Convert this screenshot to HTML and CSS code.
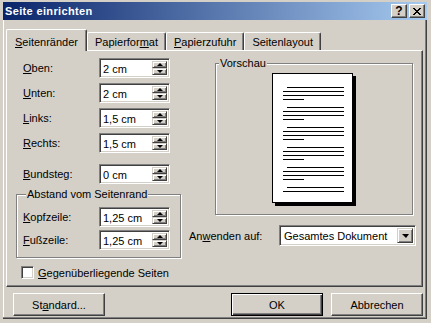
FILE: index.html
```html
<!DOCTYPE html>
<html lang="de">
<head>
    <meta charset="UTF-8">
    <title>Seite einrichten</title>
    <link rel="stylesheet" href="styles.css">
</head>
<body>
    <div class="window">
        <div class="titlebar">
            <span class="title">Seite einrichten</span>
            <div class="caption-buttons">
                <div class="cap-btn help">?</div>
                <div class="cap-btn close">
                    <svg width="8" height="7" viewBox="0 0 8 7" shape-rendering="crispEdges">
                        <path d="M0 0h2v1h-2zM6 0h2v1h-2zM1 1h2v1h-2zM5 1h2v1h-2zM2 2h4v1h-4zM3 3h2v1h-2zM2 4h4v1h-4zM1 5h2v1h-2zM5 5h2v1h-2zM0 6h2v1h-2zM6 6h2v1h-2z" fill="#000"/>
                    </svg>
                </div>
            </div>
        </div>

        <div class="client">
            <div class="tabs">
                <div class="tab active"><u>S</u>eitenränder</div>
                <div class="tab">Papierfor<u>m</u>at</div>
                <div class="tab"><u>P</u>apierzufuhr</div>
                <div class="tab">Seitenlayout</div>
            </div>

            <div class="panel">
                <div class="left-col">
                    <div class="field"><span class="label"><u>O</u>ben:</span><div class="spin"><span class="spin-value">2 cm</span><span class="spin-btns"><span class="spin-up"></span><span class="spin-down"></span></span></div></div>
                    <div class="field"><span class="label"><u>U</u>nten:</span><div class="spin"><span class="spin-value">2 cm</span><span class="spin-btns"><span class="spin-up"></span><span class="spin-down"></span></span></div></div>
                    <div class="field"><span class="label"><u>L</u>inks:</span><div class="spin"><span class="spin-value">1,5 cm</span><span class="spin-btns"><span class="spin-up"></span><span class="spin-down"></span></span></div></div>
                    <div class="field"><span class="label"><u>R</u>echts:</span><div class="spin"><span class="spin-value">1,5 cm</span><span class="spin-btns"><span class="spin-up"></span><span class="spin-down"></span></span></div></div>
                    <div class="field gutter"><span class="label"><u>B</u>undsteg:</span><div class="spin"><span class="spin-value">0 cm</span><span class="spin-btns"><span class="spin-up"></span><span class="spin-down"></span></span></div></div>

                    <fieldset class="group distance">
                        <legend>Abstand vom Seitenrand</legend>
                        <div class="field"><span class="label"><u>K</u>opfzeile:</span><div class="spin"><span class="spin-value">1,25 cm</span><span class="spin-btns"><span class="spin-up"></span><span class="spin-down"></span></span></div></div>
                        <div class="field"><span class="label"><u>F</u>ußzeile:</span><div class="spin"><span class="spin-value">1,25 cm</span><span class="spin-btns"><span class="spin-up"></span><span class="spin-down"></span></span></div></div>
                    </fieldset>

                    <div class="check-row">
                        <span class="checkbox"></span>
                        <span><u>G</u>egenüberliegende Seiten</span>
                    </div>
                </div>

                <div class="right-col">
                    <fieldset class="group preview">
                        <legend>Vorschau</legend>
                        <svg class="page" width="84" height="133" viewBox="0 0 84 133" shape-rendering="crispEdges">
                            <rect x="3" y="3" width="81" height="130" fill="#000"/>
                            <rect x="0" y="0" width="81" height="130" fill="#000"/>
                            <rect x="1" y="1" width="79" height="128" fill="#fff"/>
                            <g fill="#000">
                                <rect x="15" y="14" width="57" height="1"/>
                                <rect x="11" y="18" width="61" height="1"/>
                                <rect x="11" y="22" width="61" height="1"/>
                                <rect x="11" y="26" width="21" height="1"/>

                                <rect x="15" y="34" width="57" height="1"/>
                                <rect x="11" y="38" width="61" height="1"/>
                                <rect x="11" y="42" width="61" height="1"/>
                                <rect x="11" y="46" width="21" height="1"/>

                                <rect x="15" y="54" width="57" height="1"/>
                                <rect x="11" y="58" width="61" height="1"/>
                                <rect x="11" y="62" width="61" height="1"/>
                                <rect x="11" y="66" width="21" height="1"/>

                                <rect x="15" y="74" width="57" height="1"/>
                                <rect x="11" y="78" width="61" height="1"/>
                                <rect x="11" y="82" width="61" height="1"/>
                                <rect x="11" y="86" width="21" height="1"/>

                                <rect x="15" y="94" width="57" height="1"/>
                                <rect x="11" y="98" width="61" height="1"/>
                                <rect x="11" y="102" width="61" height="1"/>
                                <rect x="11" y="106" width="21" height="1"/>

                                <rect x="15" y="114" width="57" height="1"/>
                                <rect x="11" y="118" width="61" height="1"/>
                            </g>
                        </svg>
                    </fieldset>

                    <div class="apply-row">
                        <span class="apply-label">An<u>w</u>enden auf:</span>
                        <div class="combo">
                            <span class="combo-value">Gesamtes Dokument</span>
                            <span class="combo-btn"></span>
                        </div>
                    </div>
                </div>
            </div>

            <div class="button-row">
                <div class="btn standard">St<u>a</u>ndard...</div>
                <div class="btn default">OK</div>
                <div class="btn">Abbrechen</div>
            </div>
        </div>
    </div>
</body>
</html>
```

FILE: styles.css
```css
* {
    box-sizing: border-box;
}

body {
    margin: 0;
    background: #d4d0c8;
    font-family: "Liberation Sans", Arial, sans-serif;
    font-size: 11px;
    color: #000;
}

u {
    text-decoration: underline;
    text-underline-offset: 1px;
}

.window {
    width: 431px;
    height: 323px;
    background: #d4d0c8;
    border-style: solid;
    border-width: 2px 4px 4px 3px;
    border-color: #d4d0c8;
    box-shadow: inset -1px -1px #404040, inset -2px -2px #808080, inset 1px 1px #fff;
    display: flex;
    flex-direction: column;
}

.titlebar {
    height: 18px;
    display: flex;
    align-items: center;
    justify-content: space-between;
    padding: 0 2px 0 2px;
    background: linear-gradient(to right, #0a246a, #a6caf0);
}

.title {
    color: #fff;
    font-weight: bold;
    letter-spacing: 0.35px;
}

.caption-buttons {
    display: flex;
    gap: 2px;
}

.cap-btn {
    width: 16px;
    height: 14px;
    background: #d4d0c8;
    border: 1px solid;
    border-color: #fff #404040 #404040 #fff;
    box-shadow: inset -1px -1px #808080;
    display: flex;
    align-items: center;
    justify-content: center;
}

.help {
    font-weight: bold;
    font-size: 12px;
    line-height: 12px;
}

.client {
    flex: 1;
    padding: 9px 4px 0 3px;
    display: flex;
    flex-direction: column;
}

/* tabs */
.tabs {
    display: flex;
    align-items: flex-end;
    height: 22px;
    position: relative;
    z-index: 1;
    margin-bottom: -1px;
}

.tab {
    height: 18px;
    margin-bottom: 1px;
    padding: 2px 7px 0;
    line-height: 14px;
    border-top: 1px solid #fff;
    border-left: 1px solid #fff;
    border-right: 1px solid #404040;
    box-shadow: inset -1px 0 #808080;
    border-radius: 2px 2px 0 0;
    background: #d4d0c8;
}

.tab.active {
    height: 22px;
    margin-bottom: 0;
    padding: 5px 8px 0;
}

/* panel */
.panel {
    height: 237px;
    border: 1px solid;
    border-color: #fff #404040 #404040 #fff;
    box-shadow: inset -1px -1px #808080;
    display: flex;
}

.left-col {
    width: 178px;
    padding: 7px 0 0 16px;
    display: flex;
    flex-direction: column;
    gap: 5px;
}

.field {
    display: flex;
    align-items: center;
    height: 20px;
}

.label {
    width: 76px;
}

.field.gutter {
    margin-top: 6px;
}

.spin {
    width: 71px;
    height: 20px;
    background: #fff;
    border: 1px solid;
    border-color: #808080 #fff #fff #808080;
    box-shadow: inset 1px 1px #404040, inset -1px -1px #d4d0c8;
    display: flex;
    padding: 2px;
}

.spin-value {
    flex: 1;
    padding-left: 1px;
    line-height: 16px;
}

.spin-btns {
    width: 15px;
    display: flex;
    flex-direction: column;
}

.spin-up,
.spin-down {
    flex: 1;
    background: #d4d0c8;
    border: 1px solid;
    border-color: #d4d0c8 #404040 #404040 #d4d0c8;
    box-shadow: inset 1px 1px #fff, inset -1px -1px #808080;
    display: flex;
    align-items: center;
    justify-content: center;
}

.spin-up::before,
.spin-down::before {
    content: "";
    border-left: 3px solid transparent;
    border-right: 3px solid transparent;
}

.spin-up::before {
    border-bottom: 3px solid #000;
}

.spin-down::before {
    border-top: 3px solid #000;
}

/* group boxes */
.group {
    margin: 0;
    border: 1px solid #808080;
    box-shadow: 1px 1px 0 #fff, inset 1px 1px 0 #fff;
}

.group legend {
    padding: 0 1px;
    margin-left: 3px;
    line-height: 13px;
    background: #d4d0c8;
}

.distance {
    margin: -1px 0 0 -7px;
    width: 165px;
    padding: 6px 0 7px 6px;
    display: flex;
    flex-direction: column;
    gap: 3px;
}

.check-row {
    display: flex;
    align-items: center;
    gap: 4px;
    margin: 3px 0 0 -2px;
}

.checkbox {
    width: 13px;
    height: 13px;
    background: #fff;
    border: 1px solid;
    border-color: #808080 #fff #fff #808080;
    box-shadow: inset 1px 1px #404040, inset -1px -1px #d4d0c8;
}

/* right column */
.right-col {
    flex: 1;
    padding: 6px 6px 0 4px;
    display: flex;
    flex-direction: column;
}

.preview {
    margin: 0 3px 0 26px;
    padding: 3px 0 8px 0;
    display: flex;
    justify-content: center;
}

.page {
    display: block;
}

.apply-row {
    display: flex;
    align-items: center;
    margin-top: 10px;
}

.apply-label {
    width: 90px;
}

.combo {
    width: 137px;
    height: 21px;
    background: #fff;
    border: 1px solid;
    border-color: #808080 #fff #fff #808080;
    box-shadow: inset 1px 1px #404040, inset -1px -1px #d4d0c8;
    display: flex;
    padding: 2px;
}

.combo-value {
    flex: 1;
    padding-left: 2px;
    line-height: 17px;
}

.combo-btn {
    width: 16px;
    background: #d4d0c8;
    border: 1px solid;
    border-color: #d4d0c8 #404040 #404040 #d4d0c8;
    box-shadow: inset 1px 1px #fff, inset -1px -1px #808080;
    display: flex;
    align-items: center;
    justify-content: center;
}

.combo-btn::before {
    content: "";
    border-left: 4px solid transparent;
    border-right: 3px solid transparent;
    border-top: 4px solid #000;
}

/* buttons */
.button-row {
    display: flex;
    gap: 8px;
    margin-top: 6px;
    padding-left: 7px;
}

.btn {
    width: 92px;
    height: 23px;
    background: #d4d0c8;
    border: 1px solid;
    border-color: #fff #404040 #404040 #fff;
    box-shadow: inset -1px -1px #808080;
    display: flex;
    align-items: center;
    justify-content: center;
}

.btn.standard {
    margin-right: auto;
}

.btn.default {
    border-color: #000;
    box-shadow: inset 1px 1px #fff, inset -1px -1px #404040, inset -2px -2px #808080;
}
```
